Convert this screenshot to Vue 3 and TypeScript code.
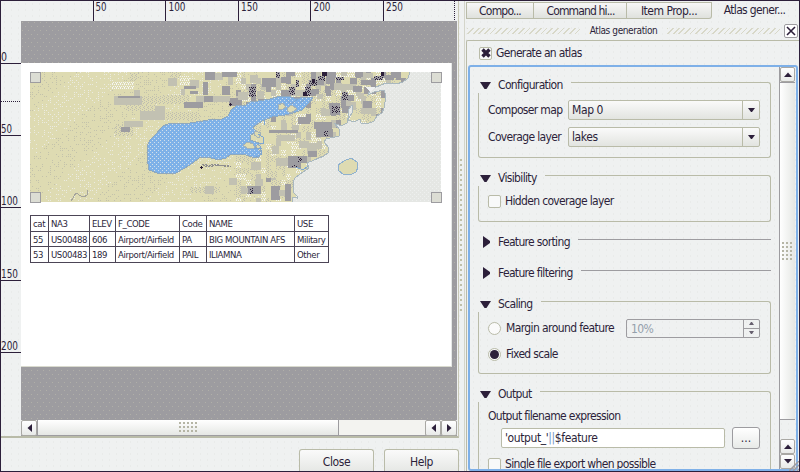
<script setup lang="ts">
import { ref } from 'vue'

interface Block { x: number; y: number; w: number; h: number; c: string }

const generate = ref(true)
const hidden = ref(false)
const mode = ref<'margin' | 'fixed'>('fixed')

const topTicks = [
  { x: 92, label: '50', tx: 95.5, w: 11 },
  { x: 164, label: '100', tx: 168.5, w: 17 },
  { x: 237, label: '150', tx: 241, w: 17 },
  { x: 309, label: '200', tx: 313.5, w: 17 },
  { x: 382, label: '250', tx: 386, w: 17 },
]
const leftTicks = [
  { y: 62, label: '0', w: 6 },
  { y: 134, label: '50', w: 11 },
  { y: 206, label: '100', w: 17 },
  { y: 279, label: '150', w: 17 },
  { y: 351, label: '200', w: 17 },
]
const tabs = ['Compo...', 'Command hi...', 'Item Prop...', 'Atlas gener...']
const header = ['cat', 'NA3', 'ELEV', 'F_CODE', 'Code', 'NAME', 'USE']
const rows = [
  ['55', 'US00488', '606', 'Airport/Airfield', 'PA', 'BIG MOUNTAIN AFS', 'Military'],
  ['53', 'US00483', '189', 'Airport/Airfield', 'PAIL', 'ILIAMNA', 'Other'],
]

const coast = 'L410 72 408 78 403 82 396 84 386 83 376 87 370 90 368 95 374 92 384 90 386 96 384 108 382 113 377 116 374 121 367 124 361 123 360 119 354 122 348 120 353 111 352 105 349 109 348 118 347 123 341 126 334 123 340 130 339 136 326 139 324 142 329 148 328 153 324 156 314 160 307 163 309 168 303 172 295 178 293 182 293 192 297 196 297 198 293 197 292 202'

const L = '#c2c1b2'
const G = '#9d9ca0'
const D = 'url(#dark)'
const W = 'url(#pale)'
const M = 'url(#mid)'
const raw: [number, number, number, number, string][] = [
  [130, 73, 9, 7, M], [114, 96, 28, 9, L], [134, 90, 6, 6, L], [168, 78, 9, 8, L], [171, 72, 9, 6, M],
  [187, 80, 12, 8, L], [112, 81, 22, 8, W], [180, 76, 10, 10, W], [142, 96, 20, 8, M], [125, 105, 30, 6, M],
  [160, 95, 30, 9, M], [155, 112, 45, 8, M],
  [184, 102, 19, 6, G], [118, 96, 22, 2, G], [184, 86, 12, 3, G], [181, 89, 4, 6, L], [190, 91, 8, 3, G],
  [205, 72, 10, 8, G], [215, 73, 8, 7, L], [222, 72, 15, 5, G], [228, 77, 5, 8, L], [222, 86, 8, 9, G],
  [203, 82, 5, 13, G], [196, 96, 22, 6, L], [204, 96, 9, 6, G], [215, 96, 15, 6, L], [229, 101, 9, 5, G],
  [155, 106, 10, 10, L], [147, 114, 18, 5, L],
  [115, 125, 18, 11, M], [121, 127, 9, 5, G], [124, 121, 19, 6, L], [140, 111, 25, 9, L],
  [190, 187, 30, 6, M], [205, 186, 9, 8, L], [229, 178, 7, 7, L],
  [262, 78, 14, 9, G], [250, 75, 8, 8, L], [276, 72, 4, 6, D], [281, 77, 9, 6, G], [290, 72, 5, 4, G],
  [322, 72, 5, 4, '#2c1f3a'], [318, 76, 7, 5, D], [317, 80, 7, 5, G], [309, 80, 8, 6, D], [305, 87, 6, 9, D], [312, 89, 7, 5, G],
  [289, 87, 6, 8, D], [249, 87, 7, 10, D], [257, 91, 7, 8, L], [291, 97, 12, 4, G], [296, 80, 3, 7, D],
  [303, 92, 4, 5, '#2c1f3a'], [312, 79, 3, 4, '#2c1f3a'], [356, 87, 3, 4, '#2c1f3a'], [381, 72, 3, 4, '#2c1f3a'],
  [330, 77, 5, 12, G], [336, 77, 8, 3, D], [334, 83, 8, 7, L], [317, 94, 6, 5, L], [325, 86, 5, 7, G],
  [350, 78, 7, 6, G], [353, 86, 9, 6, G], [342, 92, 6, 8, D], [348, 95, 6, 6, G],
  [358, 93, 6, 6, L], [361, 80, 13, 5, G], [374, 76, 9, 4, D], [385, 75, 9, 5, G],
  [391, 72, 10, 6, G], [364, 87, 12, 7, G], [362, 101, 8, 8, L], [329, 103, 11, 12, G], [332, 106, 8, 7, D], [342, 106, 8, 7, G],
  [321, 109, 9, 7, L], [363, 101, 9, 7, G], [355, 72, 8, 5, G], [365, 73, 8, 5, L], [341, 72, 6, 4, L],
  [298, 117, 12, 7, G], [292, 125, 7, 5, L], [314, 122, 18, 7, G], [316, 129, 17, 8, G], [324, 131, 4, 5, D],
  [281, 123, 6, 8, L], [269, 130, 29, 3, G], [277, 135, 18, 6, L], [299, 141, 10, 7, L], [307, 143, 10, 11, L],
  [288, 156, 19, 7, G], [288, 163, 13, 5, G], [298, 157, 4, 5, D], [292, 165, 5, 2, D], [317, 141, 5, 8, L], [308, 151, 9, 6, G],
  [272, 146, 7, 8, L], [276, 158, 12, 8, L], [247, 186, 14, 8, G], [250, 188, 3, 6, D], [241, 188, 7, 5, L],
  [271, 186, 9, 14, G], [279, 190, 6, 6, L], [285, 184, 6, 17, G], [255, 179, 8, 7, L], [230, 178, 7, 7, L],
  [265, 171, 12, 7, M], [300, 96, 8, 3, L], [258, 99, 6, 4, G], [230, 98, 12, 7, G], [238, 92, 10, 8, L],
]
const blocks: Block[] = raw.map(([x, y, w, h, c]) => ({ x, y, w, h, c }))

// Coarse relief cells for the mountainous part of the map.
let seed = 41
const rnd = () => (seed = (seed * 16807) % 2147483647) / 2147483647
const relief: Block[] = []
for (let y = 72; y < 202; y += 6) {
  for (let x = 236; x < 402; x += 5) {
    const r = rnd()
    const high = y < 115
    const c = r < 0.18 ? W : r < 0.42 ? M : r < (high ? 0.64 : 0.5) ? L : r < (high ? 0.78 : 0.51) ? G : ''
    if (c) relief.push({ x, y, w: 5, h: r < 0.3 ? 6 : 8, c })
  }
}
// Scattered grain of the plains.
const grain: Block[] = []
for (let i = 0; i < 2400; i++) {
  const x = 30 + Math.floor(rnd() * 230)
  const y = 72 + Math.floor(rnd() * 65) * 2
  const band = Math.sin((x + y * 1.15) / 17) > 0
  grain.push({ x: x - (x % 2), y, w: 1, h: 1, c: band ? '#c3c2ab' : '#ebebe0' })
}
</script>

<template>
  <div class="window">
    <section class="left">
      <div class="view">
        <svg class="top-ruler" width="456" height="20" viewBox="1 1 456 20">
          <g v-for="t in topTicks" :key="t.x">
            <rect :x="t.x + 1" y="1" width="1" height="20" fill="#2c1f3a" />
            <text :x="t.tx" y="11" :textLength="t.w" lengthAdjust="spacingAndGlyphs">{{ t.label }}</text>
          </g>
          <line x1="454.5" y1="1" x2="454.5" y2="21" stroke="#2c1f3a" stroke-dasharray="1 1" />
        </svg>
        <div class="middle">
          <svg class="left-ruler" width="20" height="415" viewBox="1 21 20 415">
            <g v-for="t in leftTicks" :key="t.y">
              <rect x="1" :y="t.y + 1" width="20" height="1" fill="#2c1f3a" />
              <text x="1" :y="t.y - 1.5" :textLength="t.w" lengthAdjust="spacingAndGlyphs">{{ t.label }}</text>
            </g>
            <line x1="1" y1="101.5" x2="21" y2="101.5" stroke="#2c1f3a" stroke-dasharray="1 1" />
          </svg>
          <div class="canvas-col">
            <div class="canvas">
              <div class="page">
                <svg class="map" width="412" height="131" viewBox="30 72 412 131" shape-rendering="crispEdges">
                  <defs>
                    <pattern id="pale" width="4" height="4" patternUnits="userSpaceOnUse">
                      <rect width="4" height="4" fill="#dedbb2" /><path d="M0 0h1v1h-1zM2 0h1v1h-1zM1 2h1v1h-1zM3 2h1v1h-1zM0 3h1v1h-1z" fill="#f4f5f4" />
                    </pattern>
                    <pattern id="mid" width="4" height="4" patternUnits="userSpaceOnUse">
                      <rect width="4" height="4" fill="#dedbb2" /><path d="M0 0h1v1h-1zM2 1h1v1h-1zM0 2h1v1h-1zM3 3h1v1h-1z" fill="#bebdb0" />
                    </pattern>
                    <pattern id="dark" width="4" height="4" patternUnits="userSpaceOnUse">
                      <rect width="4" height="4" fill="#9d9ca0" /><path d="M0 0h1v1h-1zM2 1h1v1h-1zM0 2h1v1h-1zM3 3h1v1h-1zM1 3h1v1h-1z" fill="#2c1f3a" />
                    </pattern>
                    <pattern id="water" width="4" height="4" patternUnits="userSpaceOnUse">
                      <rect width="4" height="4" fill="#7eb1e8" /><path d="M0 0h1v1h-1zM2 2h1v1h-1z" fill="#d3e0ea" />
                    </pattern>
                    <pattern id="sea" width="4" height="4" patternUnits="userSpaceOnUse">
                      <rect width="4" height="4" fill="#e5e7e4" /><path d="M0 0h1v1h-1zM2 2h1v1h-1z" fill="#eef0ef" />
                    </pattern>
                  </defs>
                  <rect x="30" y="72" width="411" height="130" fill="#dedbb2" />
                  <rect v-for="(b, i) in grain" :key="'n' + i" :x="b.x" :y="b.y" :width="b.w" :height="b.h" :fill="b.c" />
                  <rect v-for="(b, i) in relief" :key="'r' + i" :x="b.x" :y="b.y" :width="b.w" :height="b.h" :fill="b.c" />
                  <rect v-for="(b, i) in blocks" :key="'b' + i" :x="b.x" :y="b.y" :width="b.w" :height="b.h" :fill="b.c" />
                  <path :d="'M441 72' + coast + 'H441Z'" fill="url(#sea)" />
                  <path :d="coast.replace('L', 'M')" fill="none" stroke="#a9b8bf" />
                  <path d="M366 87L375 87 370 92Z" fill="#eff1f1" />
                  <rect x="30" y="202" width="412" height="1" fill="#ffffff" />
                  <path d="M338 165L344 161 351 158 357 162 358 167 356 172 350 175 343 174 339 171Z" fill="#dedbb2" stroke="#8fb1cf" />
                  <path d="M147 146L150 140 156 134 163 126 168 124 190 123 203 121 213 119 222 119 228 116 231 110 236 106 246 105 250 102 258 101 270 99 280 96 288 96 297 99 303 97 313 98 308 104 302 110 293 113 285 115 272 117 262 121 253 127 256 132 251 135 250 140 259 143 255 147 262 152 259 157 252 157 243 154 230 155 226 158 218 160 208 157 199 158 190 165 183 169 176 173 160 174 149 170 147 158Z" fill="url(#water)" stroke="#8fa8bd" />
                  <path d="M278 105l5-2 3 4-4 3-4-1zM287 108l5-3 5 4-6 4-4-2zM243 145l5-3 5 2 2 4-7 1zM255 131l6 2-2 5-5-3z" fill="#dedbb2" stroke="#a4b2b8" />
                  <path d="M264 120v5M258 134l5 3v6h-5l3 5h-7M260 146l2 8-6 3M286 99l5 5 7-5M300 103l5-4M296 167l7 3 5-4" fill="none" stroke="#7fa6d0" />
                  <path d="M71 201L76 193 81 196 84 197 87 195V190" fill="none" stroke="#a4a39c" />
                  <path d="M229 104h3v1h-3zM230 103h1v3h-1zM200 167h3v1h-3zM201 166h1v3h-1z" fill="#2c1f3a" />
                  <path d="M202 164h5M205 166h8M211 164h9M217 165h7M224 166h7M203 165h27" stroke="#8f8e90" stroke-dasharray="2 1" />
                  <path d="M30.500 72.500h10v10h-10zM431.500 72.500h10v10h-10zM30.500 192.500h10v10h-10zM431.500 192.500h10v10h-10z" fill="#dcddd4" stroke="#9d9ca0" />
                </svg>
                <table class="attrs">
                  <colgroup><col class="c1" /><col class="c2" /><col class="c3" /><col class="c4" /><col class="c5" /><col class="c6" /><col class="c7" /></colgroup>
                  <tbody>
                    <tr><td v-for="h in header" :key="h">{{ h }}</td></tr>
                    <tr v-for="r in rows" :key="r[0]"><td v-for="(c, i) in r" :key="i">{{ c }}</td></tr>
                  </tbody>
                </table>
              </div>
            </div>
            <div class="hbar">
              <button class="sbtn"><svg width="5" height="8"><path d="M5 0v8L0.500 4z" /></svg></button>
              <div class="hthumb"><i class="grip"></i></div>
              <div class="htrough"></div>
              <button class="sbtn"><svg width="5" height="8"><path d="M5 0v8L0.500 4z" /></svg></button>
              <button class="sbtn"><svg width="5" height="8"><path d="M0 0v8L4.500 4z" /></svg></button>
            </div>
          </div>
        </div>
      </div>
      <footer class="footer">
        <button class="push">Close</button>
        <button class="push">Help</button>
      </footer>
    </section>
    <div class="splitter"><i></i></div>
    <section class="right">
      <nav class="tabs">
        <div v-for="(t, i) in tabs" :key="t" class="tab" :class="['t' + i, { active: i === 3 }]">{{ t }}</div>
      </nav>
      <div class="dock-title">
        <i class="wave"></i><span>Atlas generation</span><i class="wave"></i>
        <button class="close"><svg width="10" height="10"><path d="M1 1L9 9M9 1L1 9" stroke="#2c1f3a" stroke-width="1.600" /></svg></button>
      </div>
      <div class="panel">
        <label class="gen" @click="generate = !generate">
          <span class="check"><svg v-if="generate" width="10" height="10"><path d="M1.500 1.500L8.500 8.500M8.500 1.500L1.500 8.500" stroke="#2c1f3a" stroke-width="3.400" /></svg></span>
          Generate an atlas
        </label>
        <div class="scroll">
          <div class="content">
            <div class="group config">
              <div class="head"><svg class="arrow" width="11" height="7"><path d="M0 0h11L6.500 7h-2z" /></svg><span>Configuration</span><i></i></div>
              <div class="body">
                <div class="row"><span class="lbl">Composer map</span><div class="combo"><span>Map 0</span><b><svg width="7" height="4"><path d="M0 0h7L4 4H3z" /></svg></b></div></div>
                <div class="row"><span class="lbl">Coverage layer</span><div class="combo"><span>lakes</span><b><svg width="7" height="4"><path d="M0 0h7L4 4H3z" /></svg></b></div></div>
              </div>
            </div>
            <div class="group vis">
              <div class="head"><svg class="arrow" width="11" height="7"><path d="M0 0h11L6.500 7h-2z" /></svg><span>Visibility</span><i></i></div>
              <div class="body">
                <label class="opt" @click="hidden = !hidden"><span class="check"></span><span>Hidden coverage layer</span></label>
              </div>
            </div>
            <div class="group flat">
              <div class="head"><svg class="arrow r" width="7" height="12"><path d="M0 0v12L7 7V5z" /></svg><span>Feature sorting</span><i></i></div>
            </div>
            <div class="group flat">
              <div class="head"><svg class="arrow r" width="7" height="12"><path d="M0 0v12L7 7V5z" /></svg><span>Feature filtering</span><i></i></div>
            </div>
            <div class="group scaling">
              <div class="head"><svg class="arrow" width="11" height="7"><path d="M0 0h11L6.500 7h-2z" /></svg><span>Scaling</span><i></i></div>
              <div class="body">
                <div class="opt margin-row">
                  <span class="radio" :class="{ on: mode === 'margin' }" @click="mode = 'margin'"></span><span class="margin-label">Margin around feature</span>
                  <div class="spin"><span>10%</span><b><em><svg width="5" height="3"><path d="M0 3h5L3 0H2z" /></svg></em><em><svg width="5" height="3"><path d="M0 0h5L3 3H2z" /></svg></em></b></div>
                </div>
                <div class="opt fixed-row"><span class="radio" :class="{ on: mode === 'fixed' }" @click="mode = 'fixed'"></span><span>Fixed scale</span></div>
              </div>
            </div>
            <div class="group output">
              <div class="head"><svg class="arrow" width="11" height="7"><path d="M0 0h11L6.500 7h-2z" /></svg><span>Output</span><i></i></div>
              <div class="body">
                <div class="out-label">Output filename expression</div>
                <div class="out-row"><div class="input">'output_'<u>||</u>$feature</div><button class="dots">...</button></div>
                <label class="opt single"><span class="check"></span><span>Single file export when possible</span></label>
              </div>
            </div>
          </div>
          <div class="vbar">
            <button class="sbtn"><svg width="8" height="5"><path d="M0 5h8L4 0.500z" /></svg></button>
            <div class="vthumb"><i class="grip"></i></div>
            <div class="vtrough"></div>
            <button class="sbtn"><svg width="8" height="5"><path d="M0 5h8L4 0.500z" /></svg></button>
            <button class="sbtn"><svg width="8" height="5"><path d="M0 0h8L4 4.500z" /></svg></button>
          </div>
        </div>
      </div>
    </section>
    <svg class="resize" width="10" height="10"><path d="M0 10L10 0M4 10L10 4M8 10L10 8" stroke="#9d9ca0" stroke-width="1.500" /></svg>
  </div>
</template>

<style>
body { margin: 0; background: #eff1f1; overflow: hidden; }
</style>

<style scoped>
* { box-sizing: border-box; }
.window {
  position: relative; width: 800px; height: 472px; display: flex; overflow: hidden;
  border: 1px solid #2c1f3a; background-color: #eff1f1; color: #2c1f3a;
  background-image: radial-gradient(circle, #e9ebea 0.6px, transparent 0.7px); background-size: 7px 6px;
  font: 12px/16px "DejaVu Sans Condensed", "Noto Sans", sans-serif; letter-spacing: -0.66px;
}
button { font: inherit; letter-spacing: inherit; color: inherit; padding: 0; margin: 0; }
svg { display: block; flex: none; fill: #2c1f3a; }
.left { width: 458px; display: flex; flex-direction: column; }
.view { height: 437px; border-bottom: 2px solid #b9bba8; border-right: 1px solid #c8c8b6; padding-right: 1px; display: flex; flex-direction: column; }
.top-ruler text, .left-ruler text { font: 12px "DejaVu Sans Condensed", sans-serif; letter-spacing: 0; }
.middle { display: flex; flex: 1; min-height: 0; }
.canvas-col { flex: 1; min-width: 0; display: flex; flex-direction: column; }
.canvas {
  flex: 1; padding-top: 42px; background-color: #9d9ca0;
  background-image: radial-gradient(circle at 1.5px 1.5px, #b0afa8 0.6px, transparent 0.7px), radial-gradient(circle at 4.500px 5.500px, #b0afa8 0.6px, transparent 0.7px);
  background-size: 6px 8px;
}
.page { width: 431px; height: 304px; background: #fff; padding: 9px 0 0 9px; border-bottom: 1px solid #d9dace; border-right: 1px solid #e5e8e6; }
.attrs { margin-top: 12px; width: 299px; table-layout: fixed; border-collapse: collapse; font-size: 9.500px; line-height: 12px; letter-spacing: -0.4px; }
.attrs td { height: 15.600px; padding: 2px 0 0 2px; border: 1px solid #4c4556; white-space: nowrap; }
.c1 { width: 18px; } .c2 { width: 41px; } .c3 { width: 26px; } .c4 { width: 64px; } .c5 { width: 27px; } .c6 { width: 88px; } .c7 { width: 34px; }
.hbar { height: 16px; display: flex; border-bottom: 1px solid #9d9ca0; background: #f3f3f0; }
.sbtn { width: 16px; height: 16px; display: flex; align-items: center; justify-content: center; border: 1px solid #a9a8a4; border-radius: 2px; background: linear-gradient(#fff, #e8eae8); }
.hthumb { width: 302px; display: flex; align-items: center; justify-content: center; border-left: 1px solid #9d9ca0; border-right: 1px solid #9d9ca0; background: linear-gradient(#fff, #e5e7e4); }
.htrough { flex: 1; }
.grip { width: 19px; height: 11px; background-image: radial-gradient(circle at 1px 1px, #b5b5a5 1px, transparent 1.1px); background-size: 4px 4px; }
.footer { flex: 1; display: flex; justify-content: flex-end; gap: 10px; padding-top: 11px; }
.push { width: 75px; height: 23px; border: 1px solid #b9bba8; border-bottom: 0; border-radius: 3px 3px 0 0; background: linear-gradient(#fafafa, #e5e7e4); letter-spacing: -0.4px; padding-top: 1px; }
.splitter { width: 6px; display: flex; justify-content: center; align-items: center; border-right: 1px solid #d4d5ca; }
.splitter i { width: 3px; height: 154px; background-image: radial-gradient(circle at 1px 1px, #c0c0a8 1px, transparent 1.1px); background-size: 3px 5px; }
.right { flex: 1; min-width: 0; display: flex; flex-direction: column; padding-left: 1px; }
.tabs { display: flex; height: 18px; padding-top: 1px; }
.tab { height: 17px; line-height: 17px; text-align: center; white-space: nowrap; border: 1px solid #b9bba8; border-left-width: 0; background: linear-gradient(#f7f7f7, #dfe1dd); }
.t0 { width: 68px; border-left-width: 1px; letter-spacing: -0.8px; } .t1 { width: 93px; padding-left: 1px; letter-spacing: -0.85px; } .t2 { width: 85px; border-radius: 0 0 3px 0; letter-spacing: -0.5px; } .t3 { flex: 1; }
.tab.active { border: 0; background: none; line-height: 16px; padding-right: 2px; letter-spacing: -0.65px; }
.dock-title { height: 21px; display: flex; align-items: center; gap: 10px; font-size: 10px; letter-spacing: -0.4px; padding: 2px 1px 0 1px; white-space: nowrap; }
.wave { flex: 1; height: 6px; background: repeating-linear-gradient(135deg, #d8d8c8 0 1.200px, transparent 1.200px 4px); }
.close { width: 14px; height: 14px; margin-left: -6px; display: flex; align-items: center; justify-content: center; border: 1px solid #9d9ca0; border-radius: 2px; background: #fff; }
.panel { flex: 1; min-height: 0; display: flex; flex-direction: column; border: 1px solid #b9bba8; border-right: 0; border-bottom: 0; border-radius: 2px 0 0 0; padding-left: 1px; }
.gen { display: flex; align-items: center; gap: 4px; height: 24px; padding-left: 11px; }
.check { width: 13px; height: 13px; border: 1px solid #b9bba8; border-radius: 2px; background: #f8f9f9; display: flex; align-items: center; justify-content: center; flex: none; }
.scroll { flex: 1; min-height: 0; display: flex; border: 2px solid #7eb0e8; border-radius: 3px; margin-right: 1px; overflow: hidden; }
.content { flex: 1; height: 402px; overflow: hidden; padding: 10px 8px 0 8px; }
.group { display: flex; flex-direction: column; }
.config { height: 81px; margin-bottom: 12px; } .vis { height: 52px; margin-bottom: 12px; } .flat { height: 16px; margin-bottom: 15px; }
.scaling { height: 78px; margin-bottom: 12px; } .output { height: 110px; }
.head { height: 16px; display: flex; align-items: center; padding-left: 2px; white-space: nowrap; flex: none; }
.arrow { margin-right: 7px; } .arrow.r { margin: 0 8px 0 3px; }
.head i { flex: 1; align-self: flex-end; height: 11px; margin-left: 8px; border-top: 1px solid #b9bba8; border-right: 1px solid #b9bba8; border-radius: 0 3px 0 0; }
.flat .head i { border-top-color: #9d9ca0; border-right: 0; border-radius: 0; }
.body { flex: 1; min-height: 0; border: 1px solid #b9bba8; border-top: 0; border-radius: 0 0 3px 3px; padding: 0 10px 0 9px; }
.config .body { padding-top: 7px; display: flex; flex-direction: column; gap: 7px; }
.row { display: flex; align-items: center; height: 20px; }
.lbl { width: 80px; white-space: nowrap; }
.combo { flex: 1; display: flex; height: 20px; border: 1px solid #b9bba8; border-radius: 2px; background: linear-gradient(#fafafa, #e2e4e0); line-height: 18px; padding-left: 3px; letter-spacing: -0.4px; }
.combo span { flex: 1; }
.combo b { width: 17px; border-left: 1px solid #b9bba8; display: flex; align-items: center; justify-content: center; }
.opt { display: flex; align-items: center; height: 16px; white-space: nowrap; gap: 4px; }
.vis .opt { margin-top: 7px; }
.radio { width: 13px; height: 13px; border: 1px solid #b9bba8; border-radius: 50%; background: #fafafa; display: flex; flex: none; }
.radio.on::after { content: ""; width: 9px; height: 9px; margin: 1px; border-radius: 50%; background: #2c1f3a; }
.scaling .opt { gap: 5px; }
.margin-label { letter-spacing: -0.6px; }
.margin-row { margin-top: 8px; } .fixed-row { margin-top: 10px; }
.spin { width: 134px; height: 19px; margin-left: auto; display: flex; border: 1px solid #9d9ca0; border-radius: 2px; color: #94a0ac; line-height: 18px; padding-left: 4px; }
.spin span { flex: 1; } .spin svg { fill: #67606f; }
.spin b { width: 16px; border-left: 1px solid #9d9ca0; display: flex; flex-direction: column; }
.spin em { flex: 1; display: flex; align-items: center; justify-content: center; }
.spin em + em { border-top: 1px solid #9d9ca0; }
.out-label { margin-top: 6px; }
.out-row { display: flex; gap: 7px; align-items: center; padding-left: 13px; margin-top: 3px; }
.input { flex: 1; height: 20px; border: 1px solid #b9bba8; border-radius: 2px; background: #fff; line-height: 19px; padding-left: 3px; letter-spacing: -0.4px; }
.input u { text-decoration: none; color: #7497c8; }
.dots { width: 28px; height: 22px; border: 1px solid #9d9ca0; border-radius: 3px; background: linear-gradient(#fff, #e8eae8); letter-spacing: 0; }
.single { margin-top: 7px; }
.vbar { width: 16px; display: flex; flex-direction: column; border-left: 1px solid #9d9ca0; margin-right: 1px; }
.vbar .sbtn { width: 15px; height: 15px; }
.vthumb { height: 338px; display: flex; justify-content: center; align-items: center; border-top: 1px solid #9d9ca0; border-bottom: 1px solid #9d9ca0; background: linear-gradient(90deg, #fff, #e5e7e4); }
.vthumb .grip { width: 11px; height: 19px; }
.vtrough { flex: 1; }
.resize { position: absolute; right: 0; bottom: 0; }
</style>
